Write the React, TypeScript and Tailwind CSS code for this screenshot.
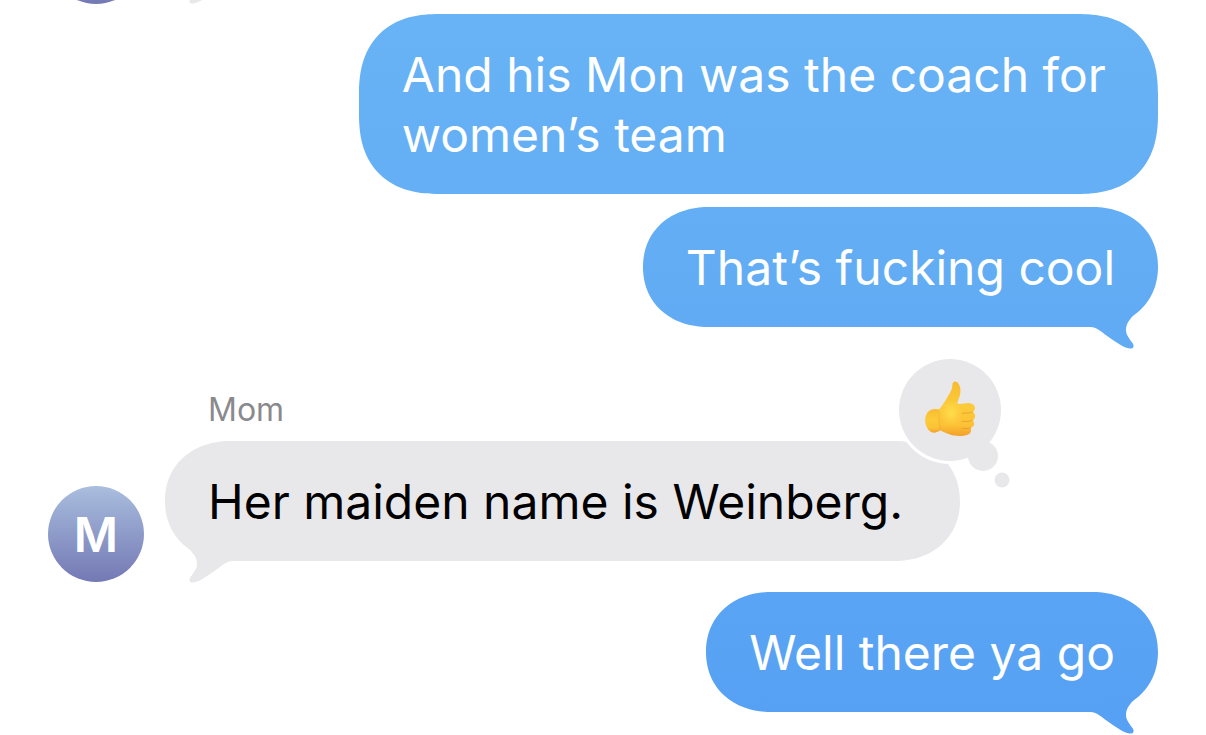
import React from "react";

type Side = "sent" | "received";

type BubbleProps = {
  side: Side;
  long?: boolean;
  tailColor?: string;
  className: string;
  children: React.ReactNode;
};

const Tail = ({ side, className = "" }: { side: Side; className?: string }) => (
  <svg
    viewBox="0 0 68 44"
    aria-hidden="true"
    className={`h-[44px] w-[68px] shrink-0 fill-current ${side === "received" ? "-scale-x-100" : ""} ${className}`}
  >
    <path d="M0 22C8 22 12 28 20 33C28 38.5 33 42 38.5 43.3C43 44.5 45 41.5 42.5 38C38 32 36 29 36 25C36 17.5 41 12.5 49.5 4.5L28 10L0 19Z" />
  </svg>
);

const Bubble = ({ side, long, tailColor, className, children }: BubbleProps) => (
  <div
    className={`relative pt-[31px] pb-[29px] pl-[43px] ${
      side === "sent" ? "pr-[43px]" : "pr-[57px]"
    } ${
      long
        ? "rounded-[80px] [corner-shape:superellipse(1.25)]"
        : "rounded-[66px/60px] [corner-shape:superellipse(1.1)]"
    } ${className}`}
  >
    {tailColor && (
      <Tail
        side={side}
        className={`absolute -bottom-[22px] ${side === "sent" ? "right-0" : "left-0"} ${tailColor}`}
      />
    )}
    {children}
  </div>
);

const Avatar = ({ initial }: { initial?: string }) => (
  <div className="flex size-24 shrink-0 items-center justify-center rounded-full bg-linear-to-b from-[#a9bede] to-[#7479b4] pt-[2px] text-[48px] leading-[60px] font-semibold text-white">
    {initial}
  </div>
);

const ThumbsUp = () => (
  <svg
    viewBox="0 0 116 134"
    role="img"
    aria-label="Thumbs up"
    className="absolute -top-[86px] -right-[51px] h-[134px] w-[116px]"
  >
    <defs>
      <linearGradient id="skin" x1="0" y1="0" x2="0" y2="1">
        <stop offset="0" stopColor="#f8bb30" />
        <stop offset="0.45" stopColor="#fccb3a" />
        <stop offset="0.8" stopColor="#fcc236" />
        <stop offset="1" stopColor="#f2a02a" />
      </linearGradient>
      <radialGradient id="glow" cx="0.5" cy="0.5" r="0.5">
        <stop offset="0" stopColor="#ffdc4c" />
        <stop offset="1" stopColor="#ffdc4c" stopOpacity="0" />
      </radialGradient>
    </defs>
    <circle cx="55" cy="55" r="54" fill="#fff" />
    <g fill="#e8e8ea">
      <circle cx="55" cy="55" r="51" />
      <circle cx="88" cy="101" r="15" />
      <circle cx="107" cy="125" r="7.5" />
    </g>
    {/* wrist */}
    <path
      fill="url(#skin)"
      d="M45 54.5C41 53.5 35 53.5 32.5 57.5C29.5 62 29.5 68 32 72.5C34.5 77.5 39 79.5 45 75.5Z"
    />
    {/* thumb and fist */}
    <path
      fill="url(#skin)"
      d="M57.5 29C57.7 26.5 60.5 25.6 62.5 27.6C65.3 30.4 66.2 35 65 40C64.3 43 62.6 46 62.2 48.6C66 49.8 71 47.6 75 48.2C80.5 49 81.5 54.5 77.8 57C81.2 59 80.8 63.6 77.6 65.4C80.2 68 79.4 71.6 75.6 72.8C77 75.6 75.6 79 72.6 79.8C68 81.6 60 81.4 55 79.6C50 78 47 75.5 43.5 75C42 68 42 60 43.5 55C48 50.5 52.5 42 55.2 37.6C56.8 35 57.3 32 57.5 29Z"
    />
    <ellipse cx="56" cy="58" rx="11" ry="13" fill="url(#glow)" />
    <g fill="none" stroke="#e8952a" strokeLinecap="round">
      <path d="M77.5 57C74 58.6 70 57.8 67 58.4" opacity="0.7" />
      <path d="M77.3 65.4C74 67 70 66.2 67 66.4" opacity="0.7" />
      <path d="M75.3 72.8C72.5 74 69.5 73.4 67 73.4" opacity="0.7" />
      <path d="M44 56C43.5 62 44.5 69 45.5 74" opacity="0.3" />
    </g>
  </svg>
);

export default function App() {
  return (
    <main className="overflow-hidden bg-white px-12 font-['Inter',sans-serif] text-[48px] leading-[60px]">
      {/* bottom edge of the message scrolled off above */}
      <div className="flex h-1 items-end gap-[21px] overflow-hidden">
        <Avatar />
        <Tail side="received" className="text-[#e8e8ea]" />
      </div>

      <div className="mt-[10px] flex flex-col items-end gap-[13px] text-white">
        <Bubble side="sent" long className="max-w-[72%] bg-linear-to-b from-[#68b3f5] to-[#64aff5]">
          And his Mon was the coach for women’s team
        </Bubble>
        <Bubble
          side="sent"
          tailColor="text-[#61abf4]"
          className="bg-linear-to-b from-[#64aef5] to-[#61abf4]"
        >
          That’s fucking cool
        </Bubble>
      </div>

      <div className="mt-[63px] ml-[160px] text-[32px] leading-[40px] text-[#8a8a8e]">Mom</div>
      <div className="mt-[11px] flex items-end gap-[21px]">
        <Avatar initial="M" />
        <Bubble
          side="received"
          tailColor="text-[#e8e8ea]"
          className="mb-[21px] bg-[#e8e8ea] text-black"
        >
          Her maiden name is Weinberg.
          <ThumbsUp />
        </Bubble>
      </div>

      <div className="mt-[10px] flex justify-end pb-[23px] text-white">
        <Bubble
          side="sent"
          tailColor="text-[#57a1f4]"
          className="bg-linear-to-b from-[#5aa4f5] to-[#57a1f4]"
        >
          Well there ya go
        </Bubble>
      </div>
    </main>
  );
}
